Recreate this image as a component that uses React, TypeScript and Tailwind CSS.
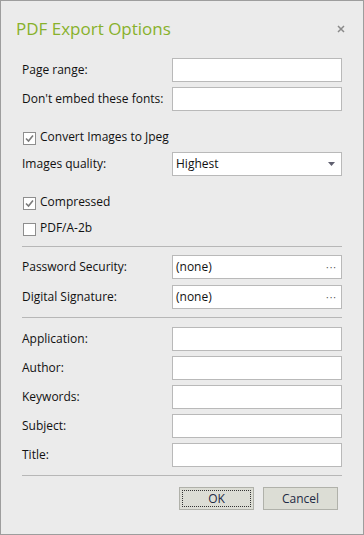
import React from "react";

const font = { fontFamily: '"Open Sans", "Noto Sans", sans-serif' };

function TextRow({ label, className = "" }: { label: string; className?: string }) {
  return (
    <div className={`flex items-center h-[24px] ${className}`}>
      <span className="w-[150px] text-[12px] text-[#111]">{label}</span>
      <div className="w-[170px] h-[24px] bg-white border border-[#b9b9b9]" />
    </div>
  );
}

function Check({ label, checked, className = "" }: { label: string; checked?: boolean; className?: string }) {
  return (
    <div className={`flex items-center h-[24px] ${className}`}>
      <span className="w-[13px] h-[13px] bg-white border border-[#8e8e8e] flex items-center justify-center mt-[3px] ml-[1px]">
        {checked && (
          <svg width="9" height="9" viewBox="0 0 9 9">
            <path d="M1 4.5 L3.5 7 L8 1.5" fill="none" stroke="#7a7a7a" strokeWidth="1.6" />
          </svg>
        )}
      </span>
      <span className="ml-[4px] text-[12px] text-[#111]">{label}</span>
    </div>
  );
}

function PickerRow({ label, className = "" }: { label: string; className?: string }) {
  return (
    <div className={`flex items-center h-[24px] ${className}`}>
      <span className="w-[150px] text-[12px] text-[#111]">{label}</span>
      <div className="w-[170px] h-[24px] bg-white border border-[#b9b9b9] flex items-center justify-between pl-[3px] pr-[4px]">
        <span className="text-[12px] text-[#111]">(none)</span>
        <span className="text-[10px] text-[#555] tracking-[1px] leading-none">···</span>
      </div>
    </div>
  );
}

function Sep({ className = "" }: { className?: string }) {
  return <div className={`w-[320px] h-px bg-[#b7b7b7] ${className}`} />;
}

export default function App() {
  return (
    <div style={font} className="w-[364px] h-[535px] bg-[#ebebeb] border border-[#9d9d9d] flex flex-col pl-[21px]">
      {/* header */}
      <div className="h-[57px] flex items-start justify-between -ml-[6px] pr-[18px]">
        <span className="mt-[16px] text-[17px] leading-[24px] text-[#88b12b]">PDF Export Options</span>
        <svg className="mt-[24px]" width="8" height="8" viewBox="0 0 8 8">
          <path d="M1 1 L7 7 M7 1 L1 7" stroke="#8a8a8a" strokeWidth="1.5" />
        </svg>
      </div>

      <TextRow label="Page range:" />
      <TextRow label="Don't embed these fonts:" className="mt-[5px]" />

      <Check label="Convert Images to Jpeg" checked className="mt-[14px]" />
      <div className="flex items-center h-[24px] mt-[3px]">
        <span className="w-[150px] text-[12px] text-[#111]">Images quality:</span>
        <div className="w-[170px] h-[24px] bg-white border border-[#b9b9b9] flex items-center justify-between pl-[3px] pr-[6px]">
          <span className="text-[12px] text-[#111]">Highest</span>
          <svg width="7" height="4" viewBox="0 0 7 4">
            <path d="M0 0 H7 L3.5 4 Z" fill="#5f5f6f" />
          </svg>
        </div>
      </div>

      <Check label="Compressed" checked className="mt-[14px]" />
      <Check label="PDF/A-2b" className="mt-[2px]" />

      <Sep className="mt-[6px]" />

      <PickerRow label="Password Security:" className="mt-[8px]" />
      <PickerRow label="Digital Signature:" className="mt-[6px]" />

      <Sep className="mt-[8px]" />

      <TextRow label="Application:" className="mt-[9px]" />
      <TextRow label="Author:" className="mt-[5px]" />
      <TextRow label="Keywords:" className="mt-[5px]" />
      <TextRow label="Subject:" className="mt-[5px]" />
      <TextRow label="Title:" className="mt-[5px]" />

      <Sep className="mt-[8px]" />

      <div className="flex justify-end gap-[9px] w-[316px] mt-[11px]">
        <button className="w-[75px] h-[23px] bg-[#dcddd5] border border-[#b0b1aa] p-[2px]">
          <div className="w-full h-full border border-dotted border-[#333] flex items-center justify-center text-[12px] text-[#1e2a44]">
            OK
          </div>
        </button>
        <button className="w-[75px] h-[23px] bg-[#dcddd5] border border-[#b0b1aa] flex items-center justify-center text-[12px] text-[#1e2a44]">
          Cancel
        </button>
      </div>
    </div>
  );
}
